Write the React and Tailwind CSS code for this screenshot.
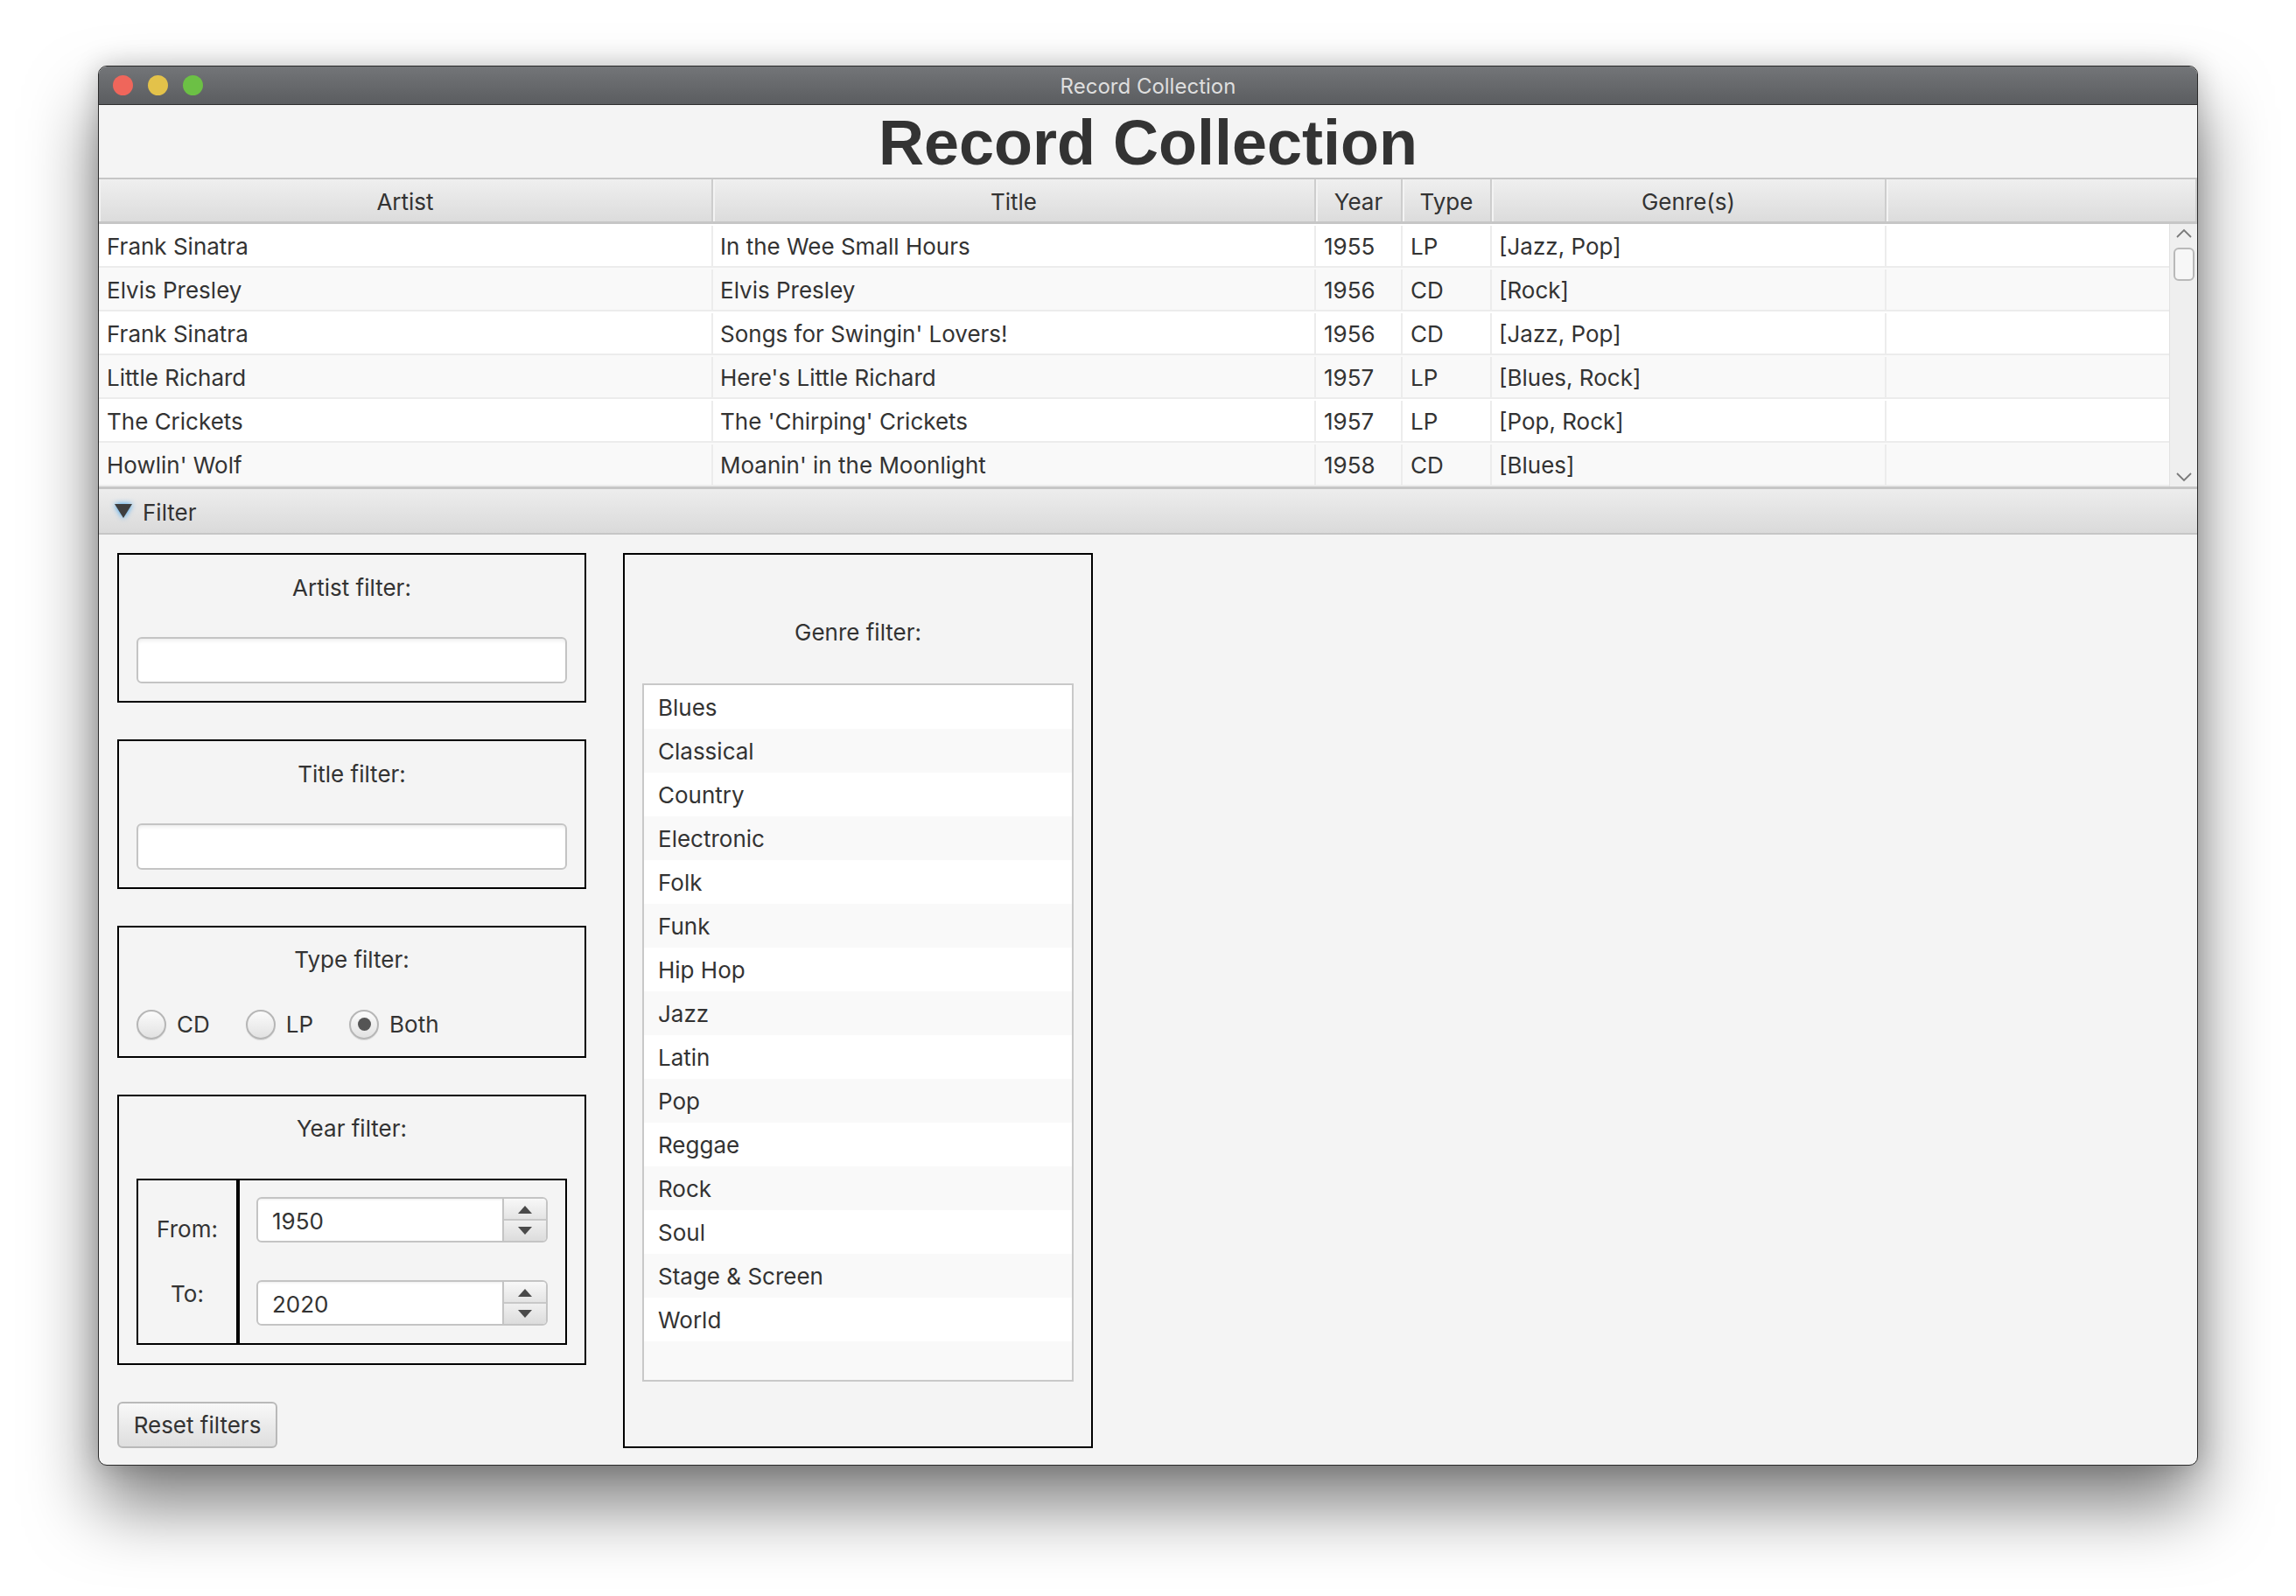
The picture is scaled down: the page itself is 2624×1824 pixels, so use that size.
import React from 'react';

const records = [
  { artist: 'Frank Sinatra', title: 'In the Wee Small Hours', year: 1955, type: 'LP', genres: '[Jazz, Pop]' },
  { artist: 'Elvis Presley', title: 'Elvis Presley', year: 1956, type: 'CD', genres: '[Rock]' },
  { artist: 'Frank Sinatra', title: "Songs for Swingin' Lovers!", year: 1956, type: 'CD', genres: '[Jazz, Pop]' },
  { artist: 'Little Richard', title: "Here's Little Richard", year: 1957, type: 'LP', genres: '[Blues, Rock]' },
  { artist: 'The Crickets', title: "The 'Chirping' Crickets", year: 1957, type: 'LP', genres: '[Pop, Rock]' },
  { artist: "Howlin' Wolf", title: "Moanin' in the Moonlight", year: 1958, type: 'CD', genres: '[Blues]' },
];

const genres = [
  'Blues', 'Classical', 'Country', 'Electronic', 'Folk', 'Funk', 'Hip Hop', 'Jazz',
  'Latin', 'Pop', 'Reggae', 'Rock', 'Soul', 'Stage & Screen', 'World',
];

function Arrow({ up }) {
  return (
    <svg width="18" height="10" viewBox="0 0 18 10">
      <path d={up ? 'M1 10 L9 1 L17 10 Z' : 'M1 0 L9 9 L17 0 Z'} fill="#4a4a4a" />
    </svg>
  );
}

function Spinner({ value }) {
  return (
    <div className="flex h-[52px] rounded-[6px] border-2 border-[#c4c4c4] bg-white overflow-hidden">
      <div className="flex-1 flex items-center pl-[16px] pt-[2px] shadow-[inset_0_3px_3px_-2px_rgba(0,0,0,0.08)]">{value}</div>
      <div className="w-[50px] flex flex-col border-l-2 border-[#c4c4c4]">
        <div className="flex-1 flex items-center justify-center bg-linear-to-b from-[#f8f8f8] to-[#e4e4e4] border-b-2 border-[#c8c8c8]">
          <Arrow up />
        </div>
        <div className="flex-1 flex items-center justify-center bg-linear-to-b from-[#f0f0f0] to-[#dcdcdc]">
          <Arrow />
        </div>
      </div>
    </div>
  );
}

function TextField() {
  return (
    <div className="h-[53px] rounded-[6px] border-2 border-[#c4c4c4] bg-white shadow-[inset_0_4px_4px_-2px_rgba(0,0,0,0.08)]" />
  );
}

function Radio({ label, checked }) {
  return (
    <div className="flex items-center gap-[12px]">
      <div className="w-[34px] h-[34px] rounded-full border-2 border-[#b6b6b6] bg-linear-to-b from-[#fbfbfb] to-[#e2e2e2] flex items-center justify-center shadow-[0_1px_1px_rgba(0,0,0,0.1)]">
        {checked && <div className="w-[15px] h-[15px] rounded-full bg-[#555]" />}
      </div>
      <span className="leading-[32px]">{label}</span>
    </div>
  );
}

function Box({ children, className = '' }) {
  return <div className={'border-2 border-black flex flex-col ' + className}>{children}</div>;
}

export default function App() {
  return (
    <div className="min-h-screen bg-white pl-[112px] pt-[75px] font-['Inter',sans-serif] text-[26px] text-[#333]">
      <div className="w-[2400px] h-[1600px] rounded-[10px] border border-[#2a2a2a] bg-[#f4f4f4] overflow-hidden flex flex-col shadow-[0_46px_80px_rgba(0,0,0,0.5),0_0_30px_rgba(0,0,0,0.2)]">
        {/* title bar */}
        <div className="relative h-[44px] flex items-center justify-center pt-[3px] bg-linear-to-b from-[#737578] to-[#5b5d60] border-b border-[#2e2e2e]">
          <div className="absolute left-[16px] top-[10px] flex gap-[17px]">
            <div className="w-[23px] h-[23px] rounded-full bg-[#ef665b]" />
            <div className="w-[23px] h-[23px] rounded-full bg-[#e3c24a]" />
            <div className="w-[23px] h-[23px] rounded-full bg-[#6cc045]" />
          </div>
          <span className="text-[24px] text-[#dedede]">Record Collection</span>
        </div>

        <div className="h-[84px] flex items-center justify-center pt-[3px]">
          <h1 className="font-['Liberation_Sans',Arial,sans-serif] font-bold text-[72px] leading-none text-[#333]">
            Record Collection
          </h1>
        </div>

        {/* table header */}
        <div className="h-[53px] border-t-2 border-b-[3px] border-[#c6c6c6] bg-linear-to-b from-[#efefef] to-[#dcdcdc] grid grid-cols-[702px_689px_99px_102px_451px_1fr]">
          {['Artist', 'Title', 'Year', 'Type', 'Genre(s)', ''].map((h, i) => (
            <div key={i} className="flex items-center justify-center pt-[3px] border-r-2 border-[#cdcdcd] shadow-[inset_2px_0_0_#f3f3f3]">
              {h}
            </div>
          ))}
        </div>

        {/* rows */}
        <div className="flex h-[300px]">
          <div className="flex-1 flex flex-col">
            {records.map((r, i) => (
              <div
                key={i}
                className={
                  'h-[50px] grid grid-cols-[702px_689px_99px_102px_451px_1fr] border-b-2 border-[#ececec] pt-[2px] ' +
                  (i % 2 === 0 ? 'bg-white' : 'bg-[#f9f9f9]')
                }
              >
                <div className="flex items-center pl-[9px] border-r-2 border-[#ececec]">{r.artist}</div>
                <div className="flex items-center pl-[8px] border-r-2 border-[#ececec]">{r.title}</div>
                <div className="flex items-center pl-[9px] border-r-2 border-[#ececec]">{r.year}</div>
                <div className="flex items-center pl-[9px] border-r-2 border-[#ececec]">{r.type}</div>
                <div className="flex items-center pl-[8px] border-r-2 border-[#ececec]">{r.genres}</div>
                <div />
              </div>
            ))}
          </div>
          <div className="w-[32px] bg-[#efefef] border-l border-[#e2e2e2] flex flex-col items-center">
            <svg className="mt-[5px]" width="20" height="12" viewBox="0 0 20 12">
              <path d="M2 10 L10 2 L18 10" fill="none" stroke="#7a7a7a" strokeWidth="1.8" />
            </svg>
            <div className="mt-[10px] w-[24px] h-[38px] rounded-[6px] border-2 border-[#b9b9b9] bg-[#f7f7f7]" />
            <div className="flex-1" />
            <svg className="mb-[5px]" width="20" height="12" viewBox="0 0 20 12">
              <path d="M2 2 L10 10 L18 2" fill="none" stroke="#7a7a7a" strokeWidth="1.8" />
            </svg>
          </div>
        </div>

        {/* filter bar */}
        <div className="h-[55px] border-t-[3px] border-b-2 border-[#c6c6c6] bg-linear-to-b from-[#ededed] to-[#dadada] flex items-center pl-[18px] gap-[12px]">
          <svg className="drop-shadow-[0_0_3px_#2f9ff2]" width="20" height="16" viewBox="0 0 20 16">
            <path d="M0 0 L20 0 L10 16 Z" fill="#3e3e3e" />
          </svg>
          <span className="pt-[3px]">Filter</span>
        </div>

        {/* filter panel */}
        <div className="flex-1 flex items-stretch gap-[42px] pl-[21px] pt-[21px] pb-[19px]">
          <div className="w-[536px] flex flex-col gap-[42px]">
            <Box className="px-[20px] pt-[22px] pb-[20px] gap-[40px]">
              <div className="text-center leading-[32px]">Artist filter:</div>
              <TextField />
            </Box>
            <Box className="px-[20px] pt-[22px] pb-[20px] gap-[40px]">
              <div className="text-center leading-[32px]">Title filter:</div>
              <TextField />
            </Box>
            <Box className="px-[20px] pt-[21px] pb-[19px] gap-[41px]">
              <div className="text-center leading-[32px]">Type filter:</div>
              <div className="flex items-center gap-[41px]">
                <Radio label="CD" />
                <Radio label="LP" />
                <Radio label="Both" checked />
              </div>
            </Box>
            <Box className="px-[20px] pt-[21px] pb-[21px] gap-[41px]">
              <div className="text-center leading-[32px]">Year filter:</div>
              <div className="flex h-[190px] border-2 border-black">
                <div className="w-[112px] flex flex-col items-center justify-center gap-[42px]">
                  <span className="leading-[32px]">From:</span>
                  <span className="leading-[32px]">To:</span>
                </div>
                <div className="w-[4px] bg-black" />
                <div className="flex-1 flex flex-col justify-center gap-[43px] pl-[19px] pr-[20px]">
                  <Spinner value="1950" />
                  <Spinner value="2020" />
                </div>
              </div>
            </Box>
            <div>
              <button className="h-[53px] w-[183px] rounded-[6px] border-2 border-[#b9b9b9] bg-linear-to-b from-[#f8f8f8] to-[#dedede] text-[26px] text-[#333]">
                Reset filters
              </button>
            </div>
          </div>

          <Box className="w-[537px] justify-center gap-[42px] px-[20px]">
            <div className="text-center leading-[32px]">Genre filter:</div>
            <div className="h-[798px] border-2 border-[#c8c8c8] bg-[#f9f9f9] flex flex-col">
              {genres.map((g, i) => (
                <div
                  key={g}
                  className={'h-[50px] shrink-0 flex items-center pl-[16px] ' + (i % 2 === 0 ? 'bg-white' : 'bg-[#f9f9f9]')}
                >
                  {g}
                </div>
              ))}
            </div>
          </Box>
        </div>
      </div>
    </div>
  );
}
